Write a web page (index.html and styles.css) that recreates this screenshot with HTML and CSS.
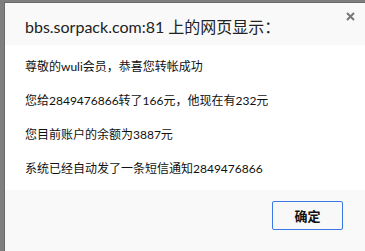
FILE: index.html
```html
<!DOCTYPE html>
<html>
<head>
<meta charset="utf-8">
<link rel="stylesheet" href="styles.css">
</head>
<body>
<div class="dialog">
  <div class="header">
    <div class="title">bbs.sorpack.com:81 上的网页显示：</div>
    <div class="close">
      <svg width="9" height="9" viewBox="0 0 9 9"><path d="M1 1 L8 8 M8 1 L1 8" stroke="#777" stroke-width="2"/></svg>
    </div>
  </div>
  <div class="content">
    <p>尊敬的wuli会员，恭喜您转帐成功</p>
    <p>您给2849476866转了166元，他现在有232元</p>
    <p>您目前账户的余额为3887元</p>
    <p>系统已经自动发了一条短信通知2849476866</p>
  </div>
  <div class="footer">
    <button class="ok">确定</button>
  </div>
</div>
</body>
</html>
```

FILE: styles.css
```css
html, body {
  margin: 0;
  padding: 0;
  height: 100%;
}
body {
  background: #7f7f7f;
  padding: 2px 0 0 4px;
  box-sizing: border-box;
  font-family: Lato, "Noto Sans CJK SC", sans-serif;
  overflow: hidden;
}
.dialog {
  height: 249px;
  display: flex;
  flex-direction: column;
  background: #fff;
  border-left: 1px solid #6a6a6a;
  border-top: 1px solid #6a6a6a;
}
.header {
  height: 42px;
  background: #f9f9f9;
  display: flex;
  justify-content: space-between;
  padding-left: 20px;
}
.title {
  font-size: 16px;
  color: #222;
  padding-top: 14px;
  line-height: 20px;
}
.close {
  padding: 9px 10px 0 0;
}
.close svg {
  display: block;
}
.content {
  height: 145px;
  background: #fff;
  padding: 5px 0 0 20px;
  box-sizing: border-box;
  font-size: 12px;
  color: #111;
}
.content p {
  margin: 0;
  line-height: 34px;
}
.footer {
  flex: 1;
  background: #f9f9f9;
  display: flex;
  justify-content: flex-end;
  align-items: flex-start;
  padding: 11px 22px 0 0;
}
.ok {
  width: 71px;
  height: 29px;
  border: 1px solid #3b78e7;
  border-radius: 2px;
  background: #f8f8f8;
  font-family: Lato, "Noto Sans CJK SC", sans-serif;
  font-size: 13px;
  font-weight: bold;
  color: #111;
  padding: 0;
}
```
